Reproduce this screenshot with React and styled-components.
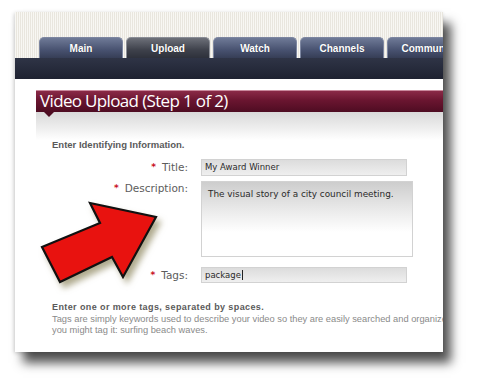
import React from 'react';
import styled, { createGlobalStyle } from 'styled-components';

const Global = createGlobalStyle`
  html, body {
    margin: 0;
    padding: 0;
    background: #ffffff;
  }
  body {
    font-family: "Liberation Sans", Arial, sans-serif;
  }
`;

const Page = styled.div`
  width: 480px;
  height: 383px;
  padding: 12px 0 0 15px;
  box-sizing: border-box;
  overflow: hidden;
`;

const Card = styled.div`
  position: relative;
  width: 428px;
  height: 340px;
  background: #fff;
  overflow: hidden;
  box-shadow: 8px 11px 10px rgba(0, 0, 0, 0.68), -1px 1px 4px rgba(0, 0, 0, 0.18);
`;

const Masthead = styled.div`
  height: 46px;
  background-color: #f6f4ef;
  background-image: repeating-linear-gradient(
    90deg,
    #f8f7f3 0px,
    #f8f7f3 1px,
    #e9e6de 1px,
    #e9e6de 2px
  );
  display: flex;
  align-items: flex-end;
`;

const TabRow = styled.div`
  display: flex;
  gap: 3px;
  padding-left: 24px;
  white-space: nowrap;
`;

const Tab = styled.div`
  flex: 0 0 84px;
  height: 21px;
  border-radius: 5px 5px 0 0;
  border: 1px solid ${p => (p.$active ? '#8a8d95' : '#7d86a0')};
  border-bottom: none;
  box-sizing: border-box;
  background: ${p =>
    p.$active
      ? 'linear-gradient(#6d7079, #3e414b 60%, #2e313b)'
      : 'linear-gradient(#6f7a97, #485270 60%, #363e56)'};
  color: #fff;
  font: bold 10px "Liberation Sans", Arial, sans-serif;
  display: flex;
  align-items: center;
  justify-content: center;
  padding-top: 1px;
  text-shadow: 0 0 1px rgba(0, 0, 0, 0.4);
`;

const NavBar = styled.div`
  height: 21px;
  background: linear-gradient(#2f3446, #1e2231);
`;

const Body = styled.div`
  padding: 11px 0 0 21px;
`;

const Panel = styled.div`
  position: relative;
`;

const Header = styled.div`
  position: relative;
  height: 22px;
  background: linear-gradient(#8a2a47, #6a1530 45%, #4e0c22);
  border-top: 1px solid #c98a9d;
  box-sizing: border-box;
  color: #fff;
  font: 17px "Open Sans", "Liberation Sans", sans-serif;
  letter-spacing: -0.65px;
  line-height: 20px;
  padding-left: 4px;
  white-space: nowrap;

  &::after {
    content: "";
    position: absolute;
    left: 8px;
    bottom: -5px;
    border-left: 5px solid transparent;
    border-right: 5px solid transparent;
    border-top: 5px solid #4e0c22;
  }
`;

const Content = styled.div`
  background: linear-gradient(#d9d9d9, #eeeeee 16px, #ffffff 28px);
  padding: 27px 0 0 16px;
  height: 240px;
  box-sizing: border-box;
`;

const Intro = styled.div`
  font: bold 9.5px "Liberation Sans", Arial, sans-serif;
  color: #5a5a5a;
  height: 11px;
  line-height: 11px;
`;

const Form = styled.div`
  display: grid;
  grid-template-columns: 136px 212px;
  column-gap: 13px;
  margin-top: 9px;
`;

const Label = styled.div`
  text-align: right;
  font: 10.5px "DejaVu Sans", sans-serif;
  color: #5c5c5c;
  line-height: ${p => p.$lh || '17px'};
  margin-top: ${p => p.$mt || '0'};
  white-space: nowrap;
`;

const Star = styled.span`
  color: #c80f1e;
  font-weight: bold;
  font-size: 9px;
  margin-right: 6px;
  position: relative;
  top: -1px;
`;

const Field = styled.div`
  width: ${p => p.$w || '206px'};
  height: ${p => p.$h || '17px'};
  margin-top: ${p => p.$mt || '0'};
  border: 1px solid #d2d2d2;
  box-sizing: border-box;
  background: ${p =>
    p.$tall
      ? 'linear-gradient(#cdcdcd, #ececec 30px, #ffffff 50px)'
      : 'linear-gradient(#dcdcdc, #efefef)'};
  font: ${p => (p.$tall ? '8.9px' : '8.5px')} "DejaVu Sans", sans-serif;
  color: #2a2a2a;
  padding: ${p => (p.$tall ? '6px 0 0 6px' : '0 0 0 3px')};
  line-height: ${p => (p.$tall ? '12px' : '15px')};
  white-space: nowrap;
  overflow: hidden;
`;

const Caret = styled.span`
  border-left: 1px solid #222;
  margin-left: 1px;
`;

const Help = styled.div`
  margin-top: 18px;
  font: 9.3px "Liberation Sans", Arial, sans-serif;
  color: #8a8a8a;
  line-height: 11.5px;
  white-space: nowrap;
`;

const HelpTitle = styled.div`
  font-weight: bold;
  color: #5a5a5a;
  font-size: 9px;
  letter-spacing: 0.4px;
`;

const Arrow = styled.svg`
  position: absolute;
  left: 20px;
  top: 185px;
  overflow: visible;
  filter: drop-shadow(4px 5px 3px rgba(110, 100, 50, 0.55));
`;

export default function App() {
  const tabs = ['Main', 'Upload', 'Watch', 'Channels', 'Community'];
  return (
    <>
      <Global />
      <Page>
        <Card>
          <Masthead>
            <TabRow>
              {tabs.map(t => (
                <Tab key={t} $active={t === 'Upload'}>{t}</Tab>
              ))}
            </TabRow>
          </Masthead>
          <NavBar />
          <Body>
            <Panel>
              <Header>Video Upload (Step 1 of 2)</Header>
              <Content>
                <Intro>Enter Identifying Information.</Intro>
                <Form>
                  <Label><Star>*</Star>Title:</Label>
                  <Field>My Award Winner</Field>
                  <Label $mt="4px" $lh="14px"><Star>*</Star>Description:</Label>
                  <Field $tall $w="212px" $h="76px" $mt="4px">
                    The visual story of a city council meeting.
                  </Field>
                  <Label $mt="10px" $lh="16px"><Star>*</Star>Tags:</Label>
                  <Field $mt="10px" $h="16px">package<Caret /></Field>
                </Form>
                <Help>
                  <HelpTitle>Enter one or more tags, separated by spaces.</HelpTitle>
                  <div>Tags are simply keywords used to describe your video so they are easily searched and organized. For example,</div>
                  <div>you might tag it: surfing beach waves.</div>
                </Help>
              </Content>
            </Panel>
          </Body>
          <Arrow width="135" height="95" viewBox="0 0 135 95">
            <polygon
              points="7,50 65,26 55,6 121,20 88,80 77,60 25,85"
              fill="#e8120f"
              stroke="#111"
              strokeWidth="2.2"
              strokeLinejoin="miter"
            />
          </Arrow>
        </Card>
      </Page>
    </>
  );
}
